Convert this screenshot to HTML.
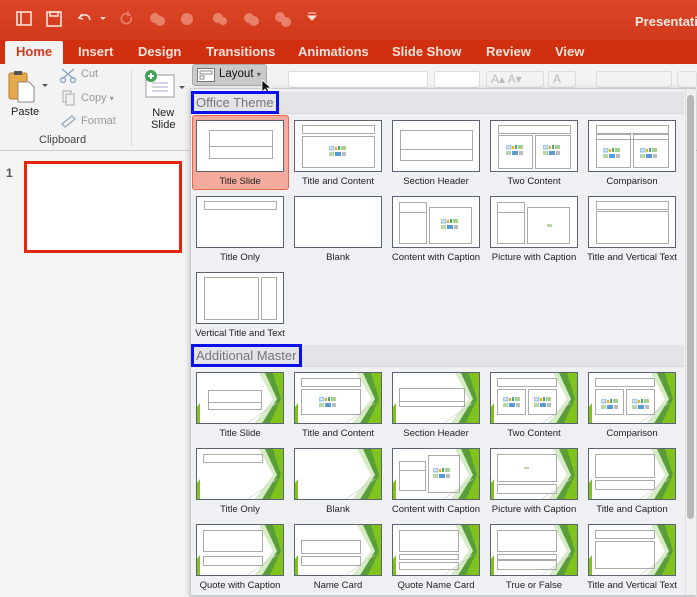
<!DOCTYPE html>
<html><head><meta charset="utf-8">
<style>
*{margin:0;padding:0;box-sizing:border-box}
body{width:697px;height:597px;overflow:hidden;position:relative;font-family:"Liberation Sans",sans-serif;background:#f4f4f4}
.abs{position:absolute}
#title{left:0;top:0;width:697px;height:40px;background:linear-gradient(#dc4427,#d23a1c)}
#tabs{left:0;top:40px;width:697px;height:25px;background:#d0300f}
.tab{position:absolute;top:44px;color:#fbe3dc;font-size:13px;font-weight:bold}
#ribbon{left:0;top:64px;width:697px;height:87px;background:#f3f3f3;border-bottom:1px solid #cfcfcf}
.rl{font-size:11px;color:#999;position:absolute}
#panel{left:190px;top:88px;width:506px;height:508px;background:#eef0f4;border:1px solid #c9c9c9;box-shadow:0 2px 6px rgba(0,0,0,.25)}
.band{position:absolute;left:0;width:493px;height:22px;background:#e2e4e8;border-bottom:1px solid #d6d8dc}
.hdr{position:absolute;left:191px;height:23px;border:3px solid #0a10e8;color:#777;font-size:13px;padding:1px 2px;line-height:15px;background:#e2e4e8;white-space:nowrap}
.th{position:absolute;width:88px;height:52px;background:#fff;border:1px solid #5b6470;overflow:hidden}
.b{position:absolute;border:1px solid #aaa}
.lb{position:absolute;width:98px;text-align:center;font-size:9.5px;color:#222;white-space:nowrap}
.ic{position:absolute;width:18px;height:12px}
.sel{position:absolute;left:192px;top:115px;width:97px;height:75px;background:#f2ab9d;border:1px solid #e8674e;border-radius:3px}
</style></head><body>
<div id="title" class="abs"></div>
<svg class="abs" style="left:0;top:0" width="330" height="40">
<g fill="none" stroke="#fbe0d8" stroke-width="1.6">
<rect x="17" y="12" width="14" height="13"/><line x1="21" y1="12" x2="21" y2="25"/>
<rect x="47" y="12" width="14" height="14"/><rect x="50" y="12" width="8" height="4"/>
<path d="M82 14 l-3 4 l4 1 M79 18 c4-5 10-4 11 2"/>
<path d="M128 14 a5 5 0 1 0 3 3 M128 11 v4 h3" stroke="#e8816a"/>
</g>
<path d="M100 17 l3 3 l3 -3z" fill="#fbe0d8"/>
<g fill="#e8816a"><circle cx="155" cy="18" r="5"/><circle cx="160" cy="21" r="5"/>
<circle cx="187" cy="19" r="6"/><circle cx="218" cy="18" r="5"/><circle cx="223" cy="21" r="4"/>
<circle cx="249" cy="18" r="5"/><circle cx="254" cy="21" r="5"/><circle cx="280" cy="17" r="5"/><circle cx="286" cy="22" r="5"/></g>
<path d="M308 16 h8 l-4 4z M308 13 h8" stroke="#fbe0d8" fill="#fbe0d8"/>
</svg>
<div class="abs" style="left:635px;top:14px;color:#fde9e3;font-size:13px;font-weight:bold">Presentation</div>
<div id="tabs" class="abs"></div>
<div class="abs" style="left:5px;top:41px;width:58px;height:25px;background:#f3f3f3;border-radius:2px 2px 0 0"></div>
<div class="tab" style="left:16px;color:#d23a1c">Home</div>
<div class="tab" style="left:78px">Insert</div>
<div class="tab" style="left:138px">Design</div>
<div class="tab" style="left:206px">Transitions</div>
<div class="tab" style="left:298px">Animations</div>
<div class="tab" style="left:392px">Slide Show</div>
<div class="tab" style="left:486px">Review</div>
<div class="tab" style="left:555px">View</div>
<div id="ribbon" class="abs"></div>
<svg class="abs" style="left:8px;top:70px" width="40" height="36"><rect x="1" y="3" width="18" height="26" rx="2" fill="#e8a94e" stroke="#b07a30"/><rect x="6" y="1" width="8" height="4" fill="#555"/><path d="M10 12 h11 l5 5 v15 h-16z" fill="#fff" stroke="#888"/><path d="M34 14 l3 3 l3 -3z" fill="#555"/></svg>
<div class="abs" style="left:11px;top:106px;font-size:11px;color:#222">Paste</div>
<svg class="abs" style="left:58px;top:66px" width="22" height="64"><g stroke="#8aa6c6" fill="none" stroke-width="1.3"><path d="M4 3 l12 10 M16 3 l-12 10"/><circle cx="5" cy="14" r="2.5"/><circle cx="15" cy="14" r="2.5"/><rect x="5" y="25" width="8" height="11" stroke="#bbb"/><rect x="8" y="28" width="8" height="11" stroke="#bbb" fill="#f3f3f3"/><path d="M4 58 l10 -8 l3 3 l-10 8z" stroke="#9ab"/></g></svg>
<div class="rl" style="left:81px;top:68px">Cut</div>
<div class="rl" style="left:81px;top:92px">Copy <span style="font-size:8px">▾</span></div>
<div class="rl" style="left:81px;top:115px">Format</div>
<div class="rl" style="left:39px;top:134px;color:#444">Clipboard</div>
<div class="abs" style="left:131px;top:70px;width:1px;height:76px;background:#ddd"></div>
<svg class="abs" style="left:142px;top:68px" width="46" height="36"><rect x="4" y="7" width="28" height="22" fill="#fff" stroke="#999"/><path d="M10 19 h16 M10 23 h16 M10 15 h16" stroke="#aac"/><circle cx="9" cy="8" r="6" fill="#3aa457"/><path d="M9 5 v6 M6 8 h6" stroke="#fff" stroke-width="2"/><path d="M37 18 l3 3 l3 -3z" fill="#555"/></svg>
<div class="abs" style="left:151px;top:107px;font-size:11px;color:#222;text-align:center;line-height:12px">New<br>Slide</div>
<div class="abs" style="left:192px;top:64px;width:75px;height:22px;background:#c9c9c9;border:1px solid #aaa;border-radius:3px"></div>
<svg class="abs" style="left:197px;top:68px" width="18" height="14"><rect x="0.5" y="0.5" width="17" height="13" fill="#fff" stroke="#777"/><rect x="3" y="3" width="12" height="3" fill="none" stroke="#888"/><rect x="3" y="8" width="4" height="3" fill="none" stroke="#888"/></svg>
<div class="abs" style="left:219px;top:68px;font-size:11.5px;color:#111">Layout <span style="font-size:8px;color:#555">▾</span></div>
<div class="abs" style="left:288px;top:71px;width:140px;height:17px;background:#fff;border:1px solid #ddd;border-radius:3px"></div>
<div class="abs" style="left:434px;top:71px;width:46px;height:17px;background:#fff;border:1px solid #ddd;border-radius:3px"></div>
<div class="abs" style="left:486px;top:71px;width:58px;height:17px;border:1px solid #ddd;border-radius:3px;color:#bbb;font-size:12px;padding-left:4px">A▴ A▾</div>
<div class="abs" style="left:548px;top:71px;width:28px;height:17px;border:1px solid #ddd;border-radius:3px;color:#bbb;font-size:12px;padding-left:4px">A</div>
<div class="abs" style="left:596px;top:71px;width:76px;height:17px;border:1px solid #ddd;border-radius:3px"></div>
<div class="abs" style="left:677px;top:71px;width:20px;height:17px;border:1px solid #ddd;border-radius:3px"></div>
<div class="abs" style="left:6px;top:166px;font-size:12px;font-weight:bold;color:#555">1</div>
<div class="abs" style="left:24px;top:161px;width:158px;height:92px;background:#fff;border:3px solid #e0290b"></div>
<div id="panel" class="abs">
 <div class="band" style="top:3px"></div>
 <div class="band" style="top:256px"></div>
 <div class="abs" style="left:494px;top:0;width:11px;height:506px;background:#f0f0f0;border-left:1px solid #ddd"></div>
 <div class="abs" style="left:496px;top:6px;width:7px;height:424px;background:#b8b8b8;border-radius:4px"></div>
</div>
<svg class="abs" style="left:261px;top:79px" width="12" height="16"><path d="M1 1 v12 l3-3 l3 5 l2-1 l-3-5 h4z" fill="#111" stroke="#fff" stroke-width=".8"/></svg>
<div class="hdr" style="top:91px;width:88px">Office Theme</div>
<div class="hdr" style="top:344px;width:111px">Additional Master</div>
<div class="sel"></div>

<svg width="0" height="0" style="position:absolute">
<defs>
<g id="icons"><rect x="0" y="0" width="5" height="4" fill="#cfe0f5" stroke="#5b9bd5" stroke-width=".6"/><rect x="6" y="1" width="2" height="3" fill="#f0b400"/><rect x="9" y="0" width="2" height="4" fill="#4a8"/><rect x="12" y="0" width="5" height="4" fill="#a8d08d"/><rect x="0" y="6" width="5" height="4" fill="#b6d7a8"/><rect x="6" y="6" width="6" height="4" fill="#5b9bd5"/><rect x="13" y="6" width="4" height="4" fill="#bbb"/></g>
<g id="grn"><polygon points="62,0 88,0 88,52 56,52 76,26" fill="#d7ebc6"/><polygon points="68,0 80,0 88,52 64,52 80,26" fill="#5a9e3a"/><polygon points="76,0 88,0 88,52 72,52 84,26" fill="#7fc31c"/><polygon points="0,34 3,30 3,52 0,52" fill="#7fc31c"/><line x1="48" y1="52" x2="80" y2="30" stroke="#ccc" stroke-width=".6"/></g>
</defs></svg>

<div class="th" style="left:196px;top:120px"><div class="b" style="left:12px;top:9px;width:64px;height:29px"></div><div class="b" style="left:12px;top:25px;width:64px;height:1px;border-width:1px 0 0"></div></div>
<div class="th" style="left:294px;top:120px"><div class="b" style="left:7px;top:4px;width:73px;height:9px"></div><div class="b" style="left:7px;top:15px;width:73px;height:32px"></div><svg class="ic" style="left:34px;top:25px"><use href="#icons"/></svg></div>
<div class="th" style="left:392px;top:120px"><div class="b" style="left:7px;top:9px;width:73px;height:31px"></div><div class="b" style="left:7px;top:28px;width:73px;height:1px;border-width:1px 0 0"></div></div>
<div class="th" style="left:490px;top:120px"><div class="b" style="left:7px;top:4px;width:73px;height:9px"></div><div class="b" style="left:7px;top:14px;width:35px;height:34px"></div><div class="b" style="left:44px;top:14px;width:36px;height:34px"></div><svg class="ic" style="left:15px;top:24px"><use href="#icons"/></svg><svg class="ic" style="left:52px;top:24px"><use href="#icons"/></svg></div>
<div class="th" style="left:588px;top:120px"><div class="b" style="left:7px;top:4px;width:73px;height:9px"></div><div class="b" style="left:7px;top:13px;width:35px;height:34px"></div><div class="b" style="left:44px;top:13px;width:36px;height:34px"></div><div class="b" style="left:7px;top:18px;width:73px;height:1px;border-width:1px 0 0"></div><svg class="ic" style="left:14px;top:27px"><use href="#icons"/></svg><svg class="ic" style="left:51px;top:27px"><use href="#icons"/></svg></div>
<div class="lb" style="left:191px;top:176px">Title Slide</div>
<div class="lb" style="left:289px;top:176px">Title and Content</div>
<div class="lb" style="left:387px;top:176px">Section Header</div>
<div class="lb" style="left:485px;top:176px">Two Content</div>
<div class="lb" style="left:583px;top:176px">Comparison</div>
<div class="th" style="left:196px;top:196px"><div class="b" style="left:7px;top:4px;width:73px;height:9px"></div></div>
<div class="th" style="left:294px;top:196px"></div>
<div class="th" style="left:392px;top:196px"><div class="b" style="left:6px;top:5px;width:28px;height:42px"></div><div class="b" style="left:6px;top:15px;width:28px;height:1px;border-width:1px 0 0"></div><div class="b" style="left:36px;top:10px;width:43px;height:37px"></div><svg class="ic" style="left:48px;top:22px"><use href="#icons"/></svg></div>
<div class="th" style="left:490px;top:196px"><div class="b" style="left:6px;top:5px;width:28px;height:42px"></div><div class="b" style="left:6px;top:15px;width:28px;height:1px;border-width:1px 0 0"></div><div class="b" style="left:36px;top:10px;width:43px;height:37px"></div><div class="abs" style="left:56px;top:27px;width:5px;height:3px;background:#b6d7a8"></div></div>
<div class="th" style="left:588px;top:196px"><div class="b" style="left:7px;top:4px;width:73px;height:9px"></div><div class="b" style="left:7px;top:14px;width:73px;height:33px"></div></div>
<div class="lb" style="left:191px;top:252px">Title Only</div>
<div class="lb" style="left:289px;top:252px">Blank</div>
<div class="lb" style="left:387px;top:252px">Content with Caption</div>
<div class="lb" style="left:485px;top:252px">Picture with Caption</div>
<div class="lb" style="left:583px;top:252px">Title and Vertical Text</div>
<div class="th" style="left:196px;top:272px"><div class="b" style="left:7px;top:4px;width:55px;height:43px"></div><div class="b" style="left:64px;top:4px;width:16px;height:43px"></div></div>
<div class="lb" style="left:191px;top:328px">Vertical Title and Text</div>

<div class="th" style="left:196px;top:372px"><svg width="88" height="52" class="abs"><use href="#grn"/></svg><div class="b" style="left:11px;top:17px;width:54px;height:20px"></div><div class="b" style="left:11px;top:29px;width:54px;height:1px;border-width:1px 0 0"></div></div>
<div class="th" style="left:294px;top:372px"><svg width="88" height="52" class="abs"><use href="#grn"/></svg><div class="b" style="left:6px;top:5px;width:60px;height:9px"></div><div class="b" style="left:6px;top:16px;width:60px;height:26px"></div><svg class="ic" style="left:24px;top:24px"><use href="#icons"/></svg></div>
<div class="th" style="left:392px;top:372px"><svg width="88" height="52" class="abs"><use href="#grn"/></svg><div class="b" style="left:6px;top:15px;width:66px;height:19px"></div><div class="b" style="left:6px;top:28px;width:66px;height:1px;border-width:1px 0 0"></div></div>
<div class="th" style="left:490px;top:372px"><svg width="88" height="52" class="abs"><use href="#grn"/></svg><div class="b" style="left:6px;top:5px;width:60px;height:9px"></div><div class="b" style="left:6px;top:16px;width:29px;height:26px"></div><div class="b" style="left:37px;top:16px;width:29px;height:26px"></div><svg class="ic" style="left:12px;top:24px"><use href="#icons"/></svg><svg class="ic" style="left:43px;top:24px"><use href="#icons"/></svg></div>
<div class="th" style="left:588px;top:372px"><svg width="88" height="52" class="abs"><use href="#grn"/></svg><div class="b" style="left:6px;top:5px;width:60px;height:9px"></div><div class="b" style="left:6px;top:16px;width:29px;height:26px"></div><div class="b" style="left:37px;top:16px;width:29px;height:26px"></div><svg class="ic" style="left:12px;top:26px"><use href="#icons"/></svg><svg class="ic" style="left:43px;top:26px"><use href="#icons"/></svg></div>
<div class="lb" style="left:191px;top:428px">Title Slide</div>
<div class="lb" style="left:289px;top:428px">Title and Content</div>
<div class="lb" style="left:387px;top:428px">Section Header</div>
<div class="lb" style="left:485px;top:428px">Two Content</div>
<div class="lb" style="left:583px;top:428px">Comparison</div>
<div class="th" style="left:196px;top:448px"><svg width="88" height="52" class="abs"><use href="#grn"/></svg><div class="b" style="left:6px;top:5px;width:60px;height:9px"></div></div>
<div class="th" style="left:294px;top:448px"><svg width="88" height="52" class="abs"><use href="#grn"/></svg></div>
<div class="th" style="left:392px;top:448px"><svg width="88" height="52" class="abs"><use href="#grn"/></svg><div class="b" style="left:6px;top:12px;width:27px;height:30px"></div><div class="b" style="left:6px;top:21px;width:27px;height:1px;border-width:1px 0 0"></div><div class="b" style="left:35px;top:6px;width:32px;height:38px"></div><svg class="ic" style="left:40px;top:19px"><use href="#icons"/></svg></div>
<div class="th" style="left:490px;top:448px"><svg width="88" height="52" class="abs"><use href="#grn"/></svg><div class="b" style="left:6px;top:5px;width:60px;height:28px"></div><div class="b" style="left:6px;top:35px;width:60px;height:10px"></div><div class="abs" style="left:33px;top:18px;width:5px;height:2px;background:#b6d7a8"></div></div>
<div class="th" style="left:588px;top:448px"><svg width="88" height="52" class="abs"><use href="#grn"/></svg><div class="b" style="left:6px;top:5px;width:60px;height:24px"></div><div class="b" style="left:6px;top:31px;width:60px;height:10px"></div></div>
<div class="lb" style="left:191px;top:504px">Title Only</div>
<div class="lb" style="left:289px;top:504px">Blank</div>
<div class="lb" style="left:387px;top:504px">Content with Caption</div>
<div class="lb" style="left:485px;top:504px">Picture with Caption</div>
<div class="lb" style="left:583px;top:504px">Title and Caption</div>
<div class="th" style="left:196px;top:524px"><svg width="88" height="52" class="abs"><use href="#grn"/></svg><div class="b" style="left:6px;top:5px;width:60px;height:22px"></div><div class="b" style="left:6px;top:31px;width:60px;height:10px"></div></div>
<div class="th" style="left:294px;top:524px"><svg width="88" height="52" class="abs"><use href="#grn"/></svg><div class="b" style="left:6px;top:15px;width:60px;height:14px"></div><div class="b" style="left:6px;top:31px;width:60px;height:10px"></div></div>
<div class="th" style="left:392px;top:524px"><svg width="88" height="52" class="abs"><use href="#grn"/></svg><div class="b" style="left:6px;top:5px;width:60px;height:22px"></div><div class="b" style="left:6px;top:29px;width:60px;height:6px"></div><div class="b" style="left:6px;top:37px;width:60px;height:8px"></div></div>
<div class="th" style="left:490px;top:524px"><svg width="88" height="52" class="abs"><use href="#grn"/></svg><div class="b" style="left:6px;top:5px;width:60px;height:22px"></div><div class="b" style="left:6px;top:29px;width:60px;height:6px"></div><div class="b" style="left:6px;top:35px;width:60px;height:10px"></div></div>
<div class="th" style="left:588px;top:524px"><svg width="88" height="52" class="abs"><use href="#grn"/></svg><div class="b" style="left:6px;top:5px;width:60px;height:9px"></div><div class="b" style="left:6px;top:16px;width:60px;height:28px"></div></div>
<div class="lb" style="left:191px;top:580px">Quote with Caption</div>
<div class="lb" style="left:289px;top:580px">Name Card</div>
<div class="lb" style="left:387px;top:580px">Quote Name Card</div>
<div class="lb" style="left:485px;top:580px">True or False</div>
<div class="lb" style="left:583px;top:580px">Title and Vertical Text</div>
</body></html>
